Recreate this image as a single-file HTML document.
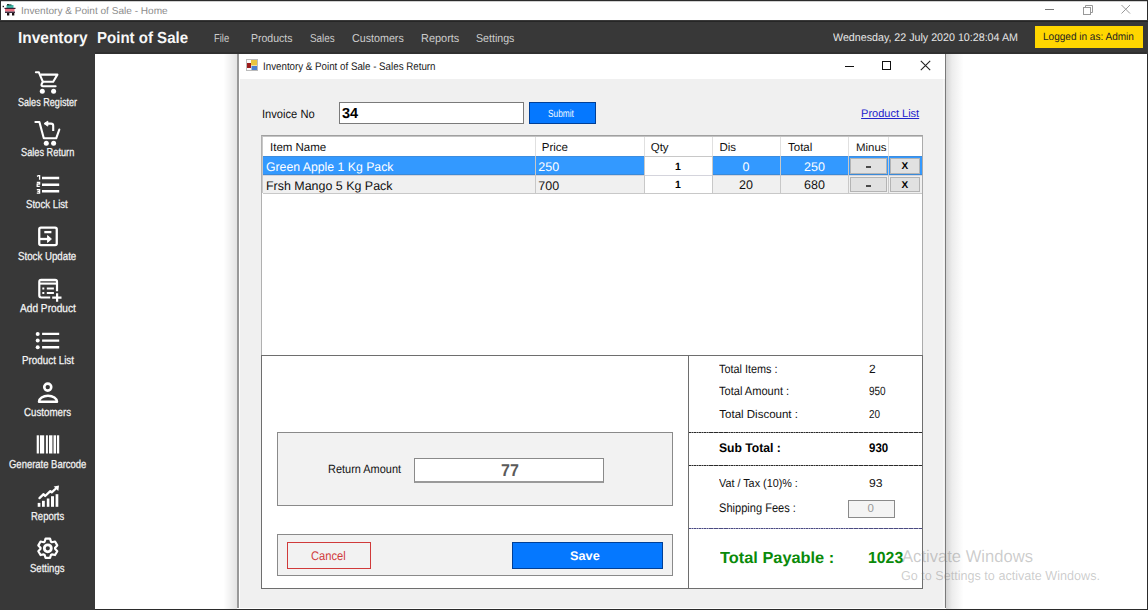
<!DOCTYPE html><html><head><meta charset="utf-8"><style>
html,body{margin:0;padding:0;width:1148px;height:610px;overflow:hidden;background:#fff}
body{position:relative;font-family:"Liberation Sans",sans-serif}
.t{position:absolute;white-space:nowrap;line-height:1;transform-origin:0 0;text-rendering:geometricPrecision}
</style></head><body>
<div style="position:absolute;left:0px;top:0px;width:1148px;height:610px;background:#2b2b2b"></div>
<div style="position:absolute;left:1px;top:1px;width:1146px;height:19px;background:#fff"></div>
<div style="position:absolute;left:1px;top:1px;width:1146px;height:1px;background:#d0d0d0"></div>
<div style="position:absolute;left:0px;top:20px;width:1148px;height:34px;background:#383838"></div>
<div style="position:absolute;left:0px;top:20px;width:1148px;height:1px;background:#3a3a3a"></div>
<div style="position:absolute;left:0px;top:21px;width:1148px;height:1px;background:#262626"></div>
<div style="position:absolute;left:0px;top:54px;width:95px;height:556px;background:#383838"></div>
<div style="position:absolute;left:95px;top:54px;width:1052px;height:555px;background:#fff"></div>
<div style="position:absolute;left:95px;top:52px;width:1051px;height:2px;background:#303030"></div>
<div class="t" style="left:20.90px;top:7px;font-size:10.0px;color:#8c8c8c;transform:scaleX(1.0074);">Inventory &amp; Point of Sale - Home</div>
<svg style="position:absolute;left:0;top:0" width="20" height="20" viewBox="0 0 20 20">
<rect x="2.6" y="5.8" width="1.4" height="1.4" fill="#222"/>
<rect x="6.5" y="5" width="7" height="3" fill="#3fb8a8"/>
<rect x="7" y="4" width="2.5" height="1.5" fill="#1d3a33"/><rect x="9.5" y="4.3" width="2" height="1.3" fill="#2a5a50"/>
<rect x="4.5" y="7.8" width="11" height="1.2" fill="#3a2030"/>
<rect x="5" y="9" width="9.5" height="2.6" fill="#ea6f80"/>
<rect x="5" y="11.6" width="10" height="1.3" fill="#2a1a30"/>
<rect x="7" y="13" width="2.3" height="2.5" fill="#1a1010"/><rect x="12" y="13" width="2.3" height="2.5" fill="#1a1010"/>
</svg>
<div style="position:absolute;left:1045px;top:9px;width:9px;height:1px;background:#777"></div>
<svg style="position:absolute;left:1080px;top:3px" width="16" height="13" viewBox="0 0 16 13">
<rect x="3.5" y="4.5" width="7" height="7" fill="none" stroke="#999" stroke-width="1"/>
<path d="M5.5 4.5 V2.5 H12.5 V9.5 H10.5" fill="none" stroke="#999" stroke-width="1"/></svg>
<svg style="position:absolute;left:1120px;top:4px" width="12" height="12" viewBox="0 0 12 12">
<path d="M1.5 1 L10 9.5 M10 1 L1.5 9.5" stroke="#999" stroke-width="1"/></svg>
<div class="t" style="left:18.30px;top:31px;font-size:16.0px;color:#f7f7f7;font-weight:bold;transform:scaleX(0.9653);">Inventory</div>
<div class="t" style="left:97.00px;top:31px;font-size:16.0px;color:#f7f7f7;font-weight:bold;transform:scaleX(0.9394);">Point of Sale</div>
<div class="t" style="left:213.60px;top:34px;font-size:11.5px;color:#cccccc;transform:scaleX(0.8162);">File</div>
<div class="t" style="left:250.50px;top:34px;font-size:11.5px;color:#cccccc;transform:scaleX(0.9146);">Products</div>
<div class="t" style="left:309.80px;top:34px;font-size:11.5px;color:#cccccc;transform:scaleX(0.8591);">Sales</div>
<div class="t" style="left:351.80px;top:34px;font-size:11.5px;color:#cccccc;transform:scaleX(0.9312);">Customers</div>
<div class="t" style="left:420.50px;top:34px;font-size:11.5px;color:#cccccc;transform:scaleX(0.9516);">Reports</div>
<div class="t" style="left:475.90px;top:34px;font-size:11.5px;color:#cccccc;transform:scaleX(0.9229);">Settings</div>
<div class="t" style="left:832.50px;top:33px;font-size:11.0px;color:#e6e6e6;transform:scaleX(0.9712);">Wednesday, 22 July 2020 10:28:04 AM</div>
<div style="position:absolute;left:1035px;top:26px;width:108px;height:22px;background:#ffd600"></div>
<div class="t" style="left:1043.40px;top:32px;font-size:10.5px;color:#222;transform:scaleX(0.9556);">Logged in as: Admin</div>
<div class="t" style="left:18.20px;top:98px;font-size:11.5px;color:#f4f4f4;transform:scaleX(0.7893);-webkit-text-stroke:0.25px #f4f4f4;">Sales Register</div>
<div class="t" style="left:20.70px;top:148px;font-size:11.5px;color:#f4f4f4;transform:scaleX(0.8015);-webkit-text-stroke:0.25px #f4f4f4;">Sales Return</div>
<div class="t" style="left:26.40px;top:200px;font-size:11.5px;color:#f4f4f4;transform:scaleX(0.8381);-webkit-text-stroke:0.25px #f4f4f4;">Stock List</div>
<div class="t" style="left:18.20px;top:252px;font-size:11.5px;color:#f4f4f4;transform:scaleX(0.8435);-webkit-text-stroke:0.25px #f4f4f4;">Stock Update</div>
<div class="t" style="left:19.80px;top:304px;font-size:11.5px;color:#f4f4f4;transform:scaleX(0.8822);-webkit-text-stroke:0.25px #f4f4f4;">Add Product</div>
<div class="t" style="left:21.90px;top:356px;font-size:11.5px;color:#f4f4f4;transform:scaleX(0.8560);-webkit-text-stroke:0.25px #f4f4f4;">Product List</div>
<div class="t" style="left:24.30px;top:408px;font-size:11.5px;color:#f4f4f4;transform:scaleX(0.8467);-webkit-text-stroke:0.25px #f4f4f4;">Customers</div>
<div class="t" style="left:9.00px;top:460px;font-size:11.5px;color:#f4f4f4;transform:scaleX(0.8234);-webkit-text-stroke:0.25px #f4f4f4;">Generate Barcode</div>
<div class="t" style="left:30.50px;top:512px;font-size:11.5px;color:#f4f4f4;transform:scaleX(0.8248);-webkit-text-stroke:0.25px #f4f4f4;">Reports</div>
<div class="t" style="left:29.70px;top:564px;font-size:11.5px;color:#f4f4f4;transform:scaleX(0.8289);-webkit-text-stroke:0.25px #f4f4f4;">Settings</div>
<svg style="position:absolute;left:0;top:54px" width="95" height="556" viewBox="0 54 95 556" fill="none" stroke="#ffffff" stroke-width="2.1">
<path d="M35.9 72.3 H38.9 L42.8 81.7 L41.6 84.2 Q41 86.2 43 86.2 H55.6" stroke-linejoin="round" stroke-linecap="round"/>
<path d="M40.6 74.6 H57.4 L53.2 81.7 H42.6" stroke-linejoin="round"/>
<circle cx="42.3" cy="91.3" r="2.5" fill="#ffffff" stroke="none"/><circle cx="53.6" cy="91.3" r="2.5" fill="#ffffff" stroke="none"/>
<path d="M35.4 122 H39.4 L43.8 138.3 H56.2 L59.3 129.6" stroke-linejoin="round" stroke-linecap="round"/>
<path d="M53.2 131 V125.8 Q53.2 123.6 51 123.6 H46.5"/>
<path d="M44 123.6 L47.8 121.2 V126.1 Z" fill="#ffffff" stroke-width="1"/>
<circle cx="46.3" cy="143.3" r="2.5" fill="#ffffff" stroke="none"/><circle cx="53.6" cy="143.3" r="2.5" fill="#ffffff" stroke="none"/>
<path d="M42 177.9 H59.2 M42 184.7 H59.2 M42 191.3 H59.2" stroke-width="2.5"/>
<path d="M37 176.3 L38.4 175.6 H39.6 V179.8 M36.8 182.5 H39.6 V184.2 H37.2 V186.4 H39.8 M36.8 189.6 H39.6 V193.2 H36.8 M37.4 191.4 H39.6" stroke-width="1.3"/>
<rect x="39.25" y="227.55" width="17.5" height="17.6" rx="1.6" stroke-width="2.3"/>
<path d="M44.3 232.1 H51.4" stroke-width="2.3"/>
<path d="M39 239 H48.5" stroke-width="2.3"/>
<path d="M51.4 239 L47.6 235.6 V242.4 Z" fill="#ffffff" stroke-width="1"/>
<path d="M50.2 297.5 H41.2 Q39.3 297.5 39.3 295.6 V281.7 Q39.3 279.8 41.2 279.8 H55.1 Q57 279.8 57 281.7 V291.2" stroke-width="2.2"/>
<path d="M39.3 283.6 H57" stroke-width="2.1"/>
<path d="M40.5 281.8 H56" stroke-width="0.8" stroke="#999"/>
<rect x="42.3" y="287.5" width="2" height="2" fill="#ffffff" stroke="none"/><rect x="42.3" y="292" width="2" height="2" fill="#ffffff" stroke="none"/>
<path d="M46.8 288.5 H53.9 M46.8 293 H53.9" stroke-width="2"/>
<path d="M52.2 297.6 H61.5 M57.1 293.2 V301.8" stroke-width="2.2"/>
<circle cx="37.7" cy="333.9" r="2" fill="#ffffff" stroke="none"/><circle cx="37.7" cy="340.6" r="2" fill="#ffffff" stroke="none"/><circle cx="37.7" cy="347.3" r="2" fill="#ffffff" stroke="none"/>
<path d="M42.1 333.9 H59.2 M42.1 340.6 H59.2 M42.1 347.3 H59.2" stroke-width="2.4"/>
<circle cx="47.75" cy="387.1" r="3.5" stroke-width="2.6"/>
<path d="M39 401.75 A9 6 0 0 1 57 401.75 Z" stroke-width="2.5" stroke-linejoin="round"/>
<g fill="#ffffff" stroke="none">
<rect x="36.7" y="435.3" width="2.2" height="18.2"/><rect x="39.9" y="435.3" width="4.3" height="18.2"/>
<rect x="45.9" y="435.3" width="2" height="18.2"/><rect x="49" y="435.3" width="3.2" height="18.2"/>
<rect x="52.2" y="435.3" width="1.7" height="18.2" fill="#999"/>
<rect x="53.9" y="435.3" width="2.2" height="18.2"/><rect x="57" y="435.3" width="2.2" height="18.2"/>
<rect x="37.7" y="502.9" width="2.7" height="3.9"/><rect x="42" y="500.8" width="2.8" height="6"/>
<rect x="46.8" y="498.5" width="2.6" height="8.3"/><rect x="51" y="496.2" width="3" height="10.6"/>
<rect x="55.6" y="494.2" width="2.7" height="12.6"/>
<path d="M59 485.4 L53.7 486.6 L58.3 490.9 Z"/></g>
<path d="M39.5 498.1 L43.6 494.2 L45.2 496 L50.3 491.2 L51.7 492.3 L56.5 488" stroke-width="2.3" stroke-linejoin="round" stroke-linecap="round"/>
<path d="M44.60 541.74 L45.57 538.65 L50.03 538.65 L51.00 541.74 L51.88 542.25 L55.04 541.55 L57.27 545.41 L55.08 547.79 L55.08 548.81 L57.27 551.19 L55.04 555.05 L51.88 554.35 L51.00 554.86 L50.03 557.95 L45.57 557.95 L44.60 554.86 L43.72 554.35 L40.56 555.05 L38.33 551.19 L40.52 548.81 L40.52 547.79 L38.33 545.41 L40.56 541.55 L43.72 542.25 Z" stroke-width="2.2" stroke-linejoin="round"/>
<circle cx="47.8" cy="548.3" r="3.5" stroke-width="2.8"/>
</svg>
<div style="position:absolute;left:224px;top:54px;width:13px;height:555px;background:linear-gradient(to right,#fefefe,#e4e4e4)"></div>
<div style="position:absolute;left:946px;top:54px;width:17px;height:555px;background:linear-gradient(to right,#d4d4d4,#ececec 35%,#fefefe)"></div>
<div style="position:absolute;left:237px;top:54px;width:2px;height:554px;background:#999"></div>
<div style="position:absolute;left:239px;top:54px;width:1px;height:554px;background:#fff"></div>
<div style="position:absolute;left:240px;top:54px;width:705px;height:25px;background:#fff"></div>
<div style="position:absolute;left:240px;top:79px;width:705px;height:529px;background:#f0f0f0"></div>
<div style="position:absolute;left:239px;top:608px;width:706px;height:1px;background:#fff"></div>
<div style="position:absolute;left:943px;top:79px;width:1px;height:529px;background:#f6f6f6"></div>
<div style="position:absolute;left:945px;top:54px;width:1px;height:554px;background:#7a7a7a"></div>
<svg style="position:absolute;left:246px;top:59px" width="12" height="12" viewBox="0 0 12 12">
<rect x="0.5" y="0.5" width="11" height="11" fill="#fafafa" stroke="#bbb" stroke-width="1"/>
<rect x="5" y="1" width="6" height="5.5" fill="#e8c440"/>
<rect x="1" y="4" width="4" height="5" fill="#9b1c1c"/>
<rect x="5.5" y="7" width="5.5" height="4" fill="#4a7fd0"/></svg>
<div class="t" style="left:263.10px;top:62px;font-size:11.0px;color:#1a1a1a;transform:scaleX(0.8874);">Inventory &amp; Point of Sale - Sales Return</div>
<div style="position:absolute;left:845px;top:66px;width:9px;height:1px;background:#111"></div>
<div style="position:absolute;left:882px;top:61px;width:9px;height:9px;border:1px solid #111;box-sizing:border-box"></div>
<svg style="position:absolute;left:920px;top:60px" width="11" height="11" viewBox="0 0 11 11">
<path d="M0.8 0.8 L10.2 10.2 M10.2 0.8 L0.8 10.2" stroke="#222" stroke-width="1.1"/></svg>
<div class="t" style="left:261.50px;top:108px;font-size:12.0px;color:#111;transform:scaleX(0.9286);">Invoice No</div>
<div style="position:absolute;left:339px;top:102px;width:185px;height:22px;background:#fff;border:1px solid #7a7a7a;box-sizing:border-box"></div>
<div class="t" style="left:342.00px;top:107px;font-size:14.5px;color:#000;font-weight:bold;">34</div>
<div style="position:absolute;left:529px;top:102px;width:67px;height:22px;background:#0578ff;border:1px solid #003f96;box-sizing:border-box"></div>
<div class="t" style="left:548.20px;top:109px;font-size:10.5px;color:#f0f8ff;transform:scaleX(0.7908);">Submit</div>
<div class="t" style="left:861.10px;top:109px;font-size:11.0px;color:#2222cc;text-decoration:underline;">Product List</div>
<div style="position:absolute;left:261px;top:135px;width:662px;height:220px;background:#fff;border-left:1px solid #b0b0b0;border-top:1px solid #a0a0a0;border-right:1px solid #ababab;box-sizing:border-box"></div>
<div style="position:absolute;left:262px;top:136px;width:660px;height:1px;background:#c4c4c4"></div>
<div style="position:absolute;left:262px;top:137px;width:1px;height:56px;background:#c8c8c8"></div>
<div style="position:absolute;left:535px;top:137px;width:1px;height:19px;background:#e0e0e0"></div>
<div style="position:absolute;left:644px;top:137px;width:1px;height:19px;background:#e0e0e0"></div>
<div style="position:absolute;left:712px;top:137px;width:1px;height:19px;background:#e0e0e0"></div>
<div style="position:absolute;left:780px;top:137px;width:1px;height:19px;background:#e0e0e0"></div>
<div style="position:absolute;left:848px;top:137px;width:1px;height:19px;background:#e0e0e0"></div>
<div style="position:absolute;left:888px;top:137px;width:1px;height:19px;background:#e0e0e0"></div>
<div class="t" style="left:270.00px;top:143px;font-size:11.5px;color:#111;">Item Name</div>
<div class="t" style="left:541.80px;top:143px;font-size:11.5px;color:#111;">Price</div>
<div class="t" style="left:650.70px;top:143px;font-size:11.5px;color:#111;">Qty</div>
<div class="t" style="left:719.40px;top:143px;font-size:11.5px;color:#111;">Dis</div>
<div class="t" style="left:788.00px;top:143px;font-size:11.5px;color:#111;">Total</div>
<div class="t" style="left:855.50px;top:143px;font-size:11.0px;color:#111;transform:scaleX(1.0383);">Minus</div>
<div style="position:absolute;left:263px;top:156px;width:659px;height:1px;background:#c8c8c8"></div>
<div style="position:absolute;left:263px;top:156px;width:659px;height:19px;background:#3399ff"></div>
<div style="position:absolute;left:263px;top:156px;width:659px;height:1px;background:#3d8ddf"></div>
<div style="position:absolute;left:263px;top:174px;width:659px;height:1px;background:#3a8ad8"></div>
<div style="position:absolute;left:263px;top:175px;width:659px;height:1px;background:#d4d4dc"></div>
<div style="position:absolute;left:263px;top:176px;width:659px;height:17px;background:#f0f0f0"></div>
<div style="position:absolute;left:263px;top:193px;width:659px;height:1px;background:#c8c8c8"></div>
<div style="position:absolute;left:535px;top:156px;width:1px;height:37px;background:#c8c8c8"></div>
<div style="position:absolute;left:644px;top:156px;width:1px;height:37px;background:#c8c8c8"></div>
<div style="position:absolute;left:712px;top:156px;width:1px;height:37px;background:#c8c8c8"></div>
<div style="position:absolute;left:780px;top:156px;width:1px;height:37px;background:#c8c8c8"></div>
<div style="position:absolute;left:848px;top:156px;width:1px;height:37px;background:#c8c8c8"></div>
<div style="position:absolute;left:888px;top:156px;width:1px;height:37px;background:#c8c8c8"></div>
<div style="position:absolute;left:645px;top:157px;width:67px;height:18px;background:#fff"></div>
<div style="position:absolute;left:645px;top:156px;width:67px;height:1px;background:#c8c8c8"></div>
<div style="position:absolute;left:645px;top:176px;width:67px;height:17px;background:#fff"></div>
<div class="t" style="left:265.90px;top:161px;font-size:12.5px;color:#fff;transform:scaleX(0.9806);">Green Apple 1 Kg Pack</div>
<div class="t" style="left:265.90px;top:180px;font-size:12.5px;color:#111;transform:scaleX(0.9949);">Frsh Mango 5 Kg Pack</div>
<div class="t" style="left:538.30px;top:161px;font-size:12.5px;color:#fff;">250</div>
<div class="t" style="left:538.30px;top:180px;font-size:12.5px;color:#111;">700</div>
<div class="t" style="left:675.00px;top:162px;font-size:10.5px;color:#000;font-weight:bold;">1</div>
<div class="t" style="left:675.00px;top:180px;font-size:10.5px;color:#000;font-weight:bold;">1</div>
<div class="t" style="left:742.50px;top:161px;font-size:12.5px;color:#fff;">0</div>
<div class="t" style="left:739.00px;top:179px;font-size:12.5px;color:#111;">20</div>
<div class="t" style="left:804.00px;top:161px;font-size:12.5px;color:#fff;">250</div>
<div class="t" style="left:804.00px;top:179px;font-size:12.5px;color:#111;">680</div>
<div style="position:absolute;left:850px;top:158px;width:37px;height:16px;background:#e1e1e1;border:1px solid #b4b4b4;box-sizing:border-box"></div>
<div style="position:absolute;left:890px;top:158px;width:30px;height:16px;background:#e1e1e1;border:1px solid #b4b4b4;box-sizing:border-box"></div>
<div style="position:absolute;left:850px;top:177px;width:37px;height:15px;background:#e1e1e1;border:1px solid #b4b4b4;box-sizing:border-box"></div>
<div style="position:absolute;left:890px;top:177px;width:30px;height:15px;background:#e1e1e1;border:1px solid #b4b4b4;box-sizing:border-box"></div>
<div style="position:absolute;left:866px;top:166px;width:5px;height:2px;background:#4a4a4a"></div>
<div style="position:absolute;left:866px;top:185px;width:5px;height:2px;background:#4a4a4a"></div>
<div class="t" style="left:901.50px;top:162px;font-size:10px;color:#000;font-weight:bold;">X</div>
<div class="t" style="left:901.50px;top:181px;font-size:10px;color:#000;font-weight:bold;">X</div>
<div style="position:absolute;left:261px;top:355px;width:662px;height:234px;background:#fff;border:1px solid #6e6e6e;box-sizing:border-box"></div>
<div style="position:absolute;left:688px;top:355px;width:1px;height:234px;background:#6e6e6e"></div>
<div style="position:absolute;left:277px;top:432px;width:396px;height:74px;background:#f2f2f2;border:1px solid #8a8a8a;box-sizing:border-box"></div>
<div class="t" style="left:327.50px;top:463px;font-size:12.0px;color:#111;transform:scaleX(0.9125);">Return Amount</div>
<div style="position:absolute;left:414px;top:458px;width:190px;height:25px;background:#fff;border:1px solid #8a8a8a;border-bottom:2px solid #9a9a9a;box-sizing:border-box"></div>
<div class="t" style="left:500.90px;top:462px;font-size:17px;color:#5a5a5a;font-weight:bold;transform:scaleX(0.9430);">77</div>
<div style="position:absolute;left:277px;top:534px;width:396px;height:42px;background:#f2f2f2;border:1px solid #8a8a8a;box-sizing:border-box"></div>
<div style="position:absolute;left:287px;top:542px;width:84px;height:27px;border:1px solid #d03a3a;box-sizing:border-box"></div>
<div class="t" style="left:310.80px;top:550px;font-size:12.5px;color:#d03a3a;transform:scaleX(0.8926);">Cancel</div>
<div style="position:absolute;left:512px;top:542px;width:151px;height:27px;background:#0578ff;border:1px solid #003f96;box-sizing:border-box"></div>
<div class="t" style="left:570.40px;top:550px;font-size:12.5px;color:#fff;font-weight:bold;transform:scaleX(1.0188);">Save</div>
<div class="t" style="left:719.30px;top:363px;font-size:12.0px;color:#111;transform:scaleX(0.9050);">Total Items :</div>
<div class="t" style="left:869.00px;top:363px;font-size:12px;color:#111;">2</div>
<div class="t" style="left:719.30px;top:385px;font-size:12.0px;color:#111;transform:scaleX(0.9224);">Total Amount :</div>
<div class="t" style="left:869.00px;top:385px;font-size:12.0px;color:#111;transform:scaleX(0.8300);">950</div>
<div class="t" style="left:719.30px;top:410px;font-size:11.5px;color:#111;">Total Discount :</div>
<div class="t" style="left:869.00px;top:410px;font-size:11.5px;color:#111;transform:scaleX(0.8627);">20</div>
<div style="position:absolute;left:689px;top:432px;width:233px;height:1px;background:repeating-linear-gradient(to right,#2a2a2a 0 1.5px,#8a8a8a 1.5px 2.5px)"></div>
<div style="position:absolute;left:689px;top:465px;width:233px;height:1px;background:repeating-linear-gradient(to right,#2a2a2a 0 1.5px,#8a8a8a 1.5px 2.5px)"></div>
<div style="position:absolute;left:689px;top:528px;width:233px;height:1px;background:repeating-linear-gradient(to right,#4a4a80 0 1.5px,#9a9ac0 1.5px 2.5px)"></div>
<div class="t" style="left:719.10px;top:442px;font-size:12.5px;color:#000;font-weight:bold;transform:scaleX(0.9729);">Sub Total :</div>
<div class="t" style="left:868.50px;top:442px;font-size:12.5px;color:#000;font-weight:bold;transform:scaleX(0.9198);">930</div>
<div class="t" style="left:719.10px;top:479px;font-size:11.5px;color:#111;transform:scaleX(0.9393);">Vat / Tax (10)% :</div>
<div class="t" style="left:868.50px;top:479px;font-size:11.5px;color:#111;transform:scaleX(1.0588);">93</div>
<div class="t" style="left:719.10px;top:502px;font-size:12.5px;color:#111;transform:scaleX(0.8852);">Shipping Fees :</div>
<div style="position:absolute;left:848px;top:500px;width:47px;height:18px;background:#f4f4f4;border:1px solid #8a8a8a;box-sizing:border-box"></div>
<div class="t" style="left:867.50px;top:504px;font-size:11.5px;color:#999;">0</div>
<div class="t" style="left:720.20px;top:551px;font-size:16.0px;color:#0a8a0a;font-weight:bold;transform:scaleX(1.0219);">Total Payable :</div>
<div class="t" style="left:867.50px;top:551px;font-size:16.0px;color:#0a8a0a;font-weight:bold;transform:scaleX(0.9881);">1023</div>
<div class="t" style="left:902.00px;top:548px;font-size:17px;color:rgba(120,120,120,0.38);transform:scaleX(0.9767);">Activate Windows</div>
<div class="t" style="left:901.00px;top:569px;font-size:13px;color:rgba(120,120,120,0.38);transform:scaleX(0.9695);">Go to Settings to activate Windows.</div>
</body></html>
